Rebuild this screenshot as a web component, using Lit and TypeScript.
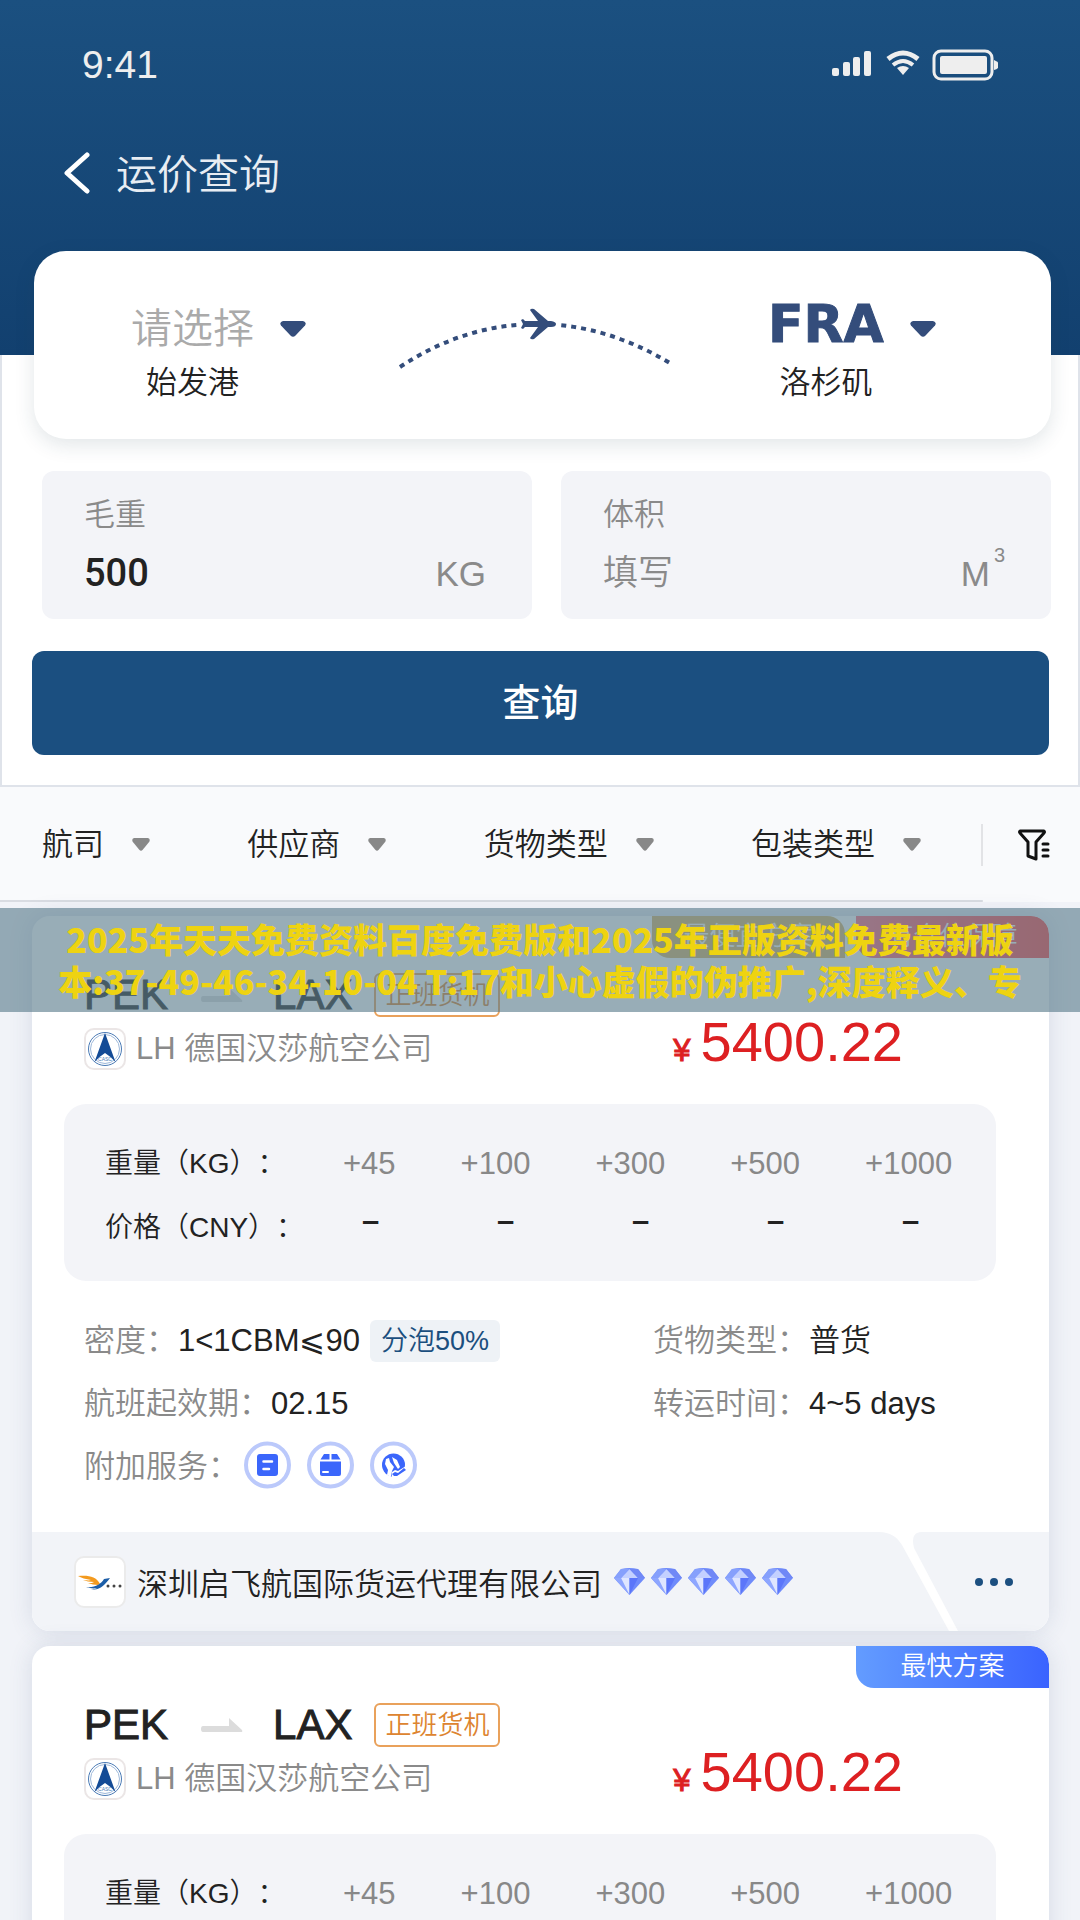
import { LitElement, html, css, svg, TemplateResult } from "lit";
import { customElement, property, state } from "lit/decorators.js";

interface Badge {
  label: string;
  tone: "gold" | "red" | "blue";
}

interface Quote {
  from: string;
  to: string;
  tag: string;
  airline: string;
  price: string;
  badges: Badge[];
  density: string;
  bubble: string;
  cargoType: string;
  startDate: string;
  transit: string;
  agent: string;
  stars: number;
}

const WEIGHT_BREAKS = ["+45", "+100", "+300", "+500", "+1000"];

const FILTERS = ["航司", "供应商", "货物类型", "包装类型"];

const BASE_QUOTE: Quote = {
  from: "PEK",
  to: "LAX",
  tag: "正班货机",
  airline: "LH 德国汉莎航空公司",
  price: "5400.22",
  badges: [],
  density: "1<1CBM⩽90",
  bubble: "分泡50%",
  cargoType: "普货",
  startDate: "02.15",
  transit: "4~5 days",
  agent: "深圳启飞航国际货运代理有限公司",
  stars: 5,
};

const QUOTES: Quote[] = [
  {
    ...BASE_QUOTE,
    badges: [
      { label: "最便宜方案", tone: "gold" },
      { label: "有仓位保障", tone: "red" },
    ],
  },
  { ...BASE_QUOTE, badges: [{ label: "最快方案", tone: "blue" }] },
];

const caret = (width: number, height: number): TemplateResult => html`
  <svg
    class="caret"
    width=${width}
    height=${height}
    viewBox="0 0 26 16"
    preserveAspectRatio="none"
    aria-hidden="true"
  >
    <path
      d="M3 0H23Q27 1 25 4.500L15.500 14.500Q13 17 10.500 14.500L1 4.500Q-1 1 3 0Z"
      fill="currentColor"
    />
  </svg>
`;

@customElement("quote-card")
class QuoteCard extends LitElement {
  @property({ attribute: false }) public quote!: Quote;

  protected render(): TemplateResult {
    const quote = this.quote;

    return html`
      <article class="card">
        <div class="badges">
          ${quote.badges.map(
            (badge) => html`<span class="badge ${badge.tone}">${badge.label}</span>`
          )}
        </div>
        <div class="summary">
          <div class="flight">
            <div class="route">
              <span>${quote.from}</span>
              <svg class="arrow" width="42" height="14" viewBox="0 0 42 14" aria-hidden="true">
                <path d="M2 8H28V0L41 12Q42 14 40 14H2Q0 14 0 11Q0 8 2 8Z" fill="#dcdcdc" />
              </svg>
              <span>${quote.to}</span>
              <span class="tag">${quote.tag}</span>
            </div>
            <div class="airline">${this.renderAirlineLogo()}<span>${quote.airline}</span></div>
          </div>
          <div class="price"><small>¥</small>${quote.price}</div>
        </div>

        ${this.renderRates()}

        <dl class="details">
          <div class="detail">
            <dt>密度：</dt>
            <dd>${quote.density}<span class="bubble">${quote.bubble}</span></dd>
          </div>
          <div class="detail">
            <dt>货物类型：</dt>
            <dd>${quote.cargoType}</dd>
          </div>
          <div class="detail">
            <dt>航班起效期：</dt>
            <dd>${quote.startDate}</dd>
          </div>
          <div class="detail">
            <dt>转运时间：</dt>
            <dd>${quote.transit}</dd>
          </div>
          <div class="detail">
            <dt>附加服务：</dt>
            <dd class="services">${this.renderServices()}</dd>
          </div>
        </dl>

        <footer class="footer">
          <div class="agent">
            ${this.renderAgentLogo()}
            <span>${quote.agent}</span>
            <span class="diamonds">
              ${Array.from({ length: quote.stars }, () => this.renderDiamond())}
            </span>
          </div>
          <svg class="slash" width="88" height="99" viewBox="0 0 88 99" aria-hidden="true">
            <path d="M9 0C20 0 27 5 32 13L79 99H88L44 16Q40 0 52 0Z" fill="#fff" />
          </svg>
          <button class="more" type="button" aria-label="更多">
            <svg width="38" height="8" viewBox="0 0 38 8">
              <g fill="#1c4f80">
                <circle cx="4" cy="4" r="4" />
                <circle cx="19" cy="4" r="4" />
                <circle cx="34" cy="4" r="4" />
              </g>
            </svg>
          </button>
        </footer>
      </article>
    `;
  }

  private renderRates(): TemplateResult {
    return html`
      <table class="rates">
        <tbody>
          <tr class="weights">
            <th scope="row">重量（KG）：</th>
            ${WEIGHT_BREAKS.map((weight) => html`<td>${weight}</td>`)}
          </tr>
          <tr class="prices">
            <th scope="row">价格（CNY）：</th>
            ${WEIGHT_BREAKS.map(() => html`<td>–</td>`)}
          </tr>
        </tbody>
      </table>
    `;
  }

  private renderAirlineLogo(): TemplateResult {
    return html`
      <svg class="airline-logo" width="42" height="42" viewBox="0 0 42 42" aria-hidden="true">
        <rect x="1" y="1" width="40" height="40" rx="9" fill="#fff" stroke="#ebe6e6" stroke-width="2" />
        <circle cx="21" cy="21" r="16.500" fill="none" stroke="#4a7ab5" stroke-width="1" />
        <circle cx="21" cy="21" r="14.500" fill="none" stroke="#9db8da" stroke-width="1" />
        <path d="M21 5L31.500 34Q26 28 21 25Q16 28 10.500 34Z" fill="#134b96" />
        <text x="21" y="33" font-size="5" text-anchor="middle" fill="#4a7ab5">CASC</text>
      </svg>
    `;
  }

  private renderAgentLogo(): TemplateResult {
    return html`
      <svg class="agent-logo" width="52" height="52" viewBox="0 0 52 52" aria-hidden="true">
        <rect x="1" y="1" width="50" height="50" rx="9" fill="#fff" stroke="#ebebeb" stroke-width="2" />
        <path
          d="M4 20C14 19 22 20 26 28L24 29C21 29 17 28 14 27C17 27 19 27 20 26C16 26 12 25 9 24C12 24 15 25 17 24C12 23 7 22 4 20Z"
          fill="#f39a1e"
        />
        <path d="M12 31C21 32 27 28 30 23L36 22C31 29 25 35 17 33C20 33 22 33 23 32C19 33 16 32 12 31Z" fill="#1c5ea8" />
        <g fill="#444">
          <circle cx="34" cy="30" r="1.500" />
          <circle cx="40" cy="30" r="1.500" />
          <circle cx="46" cy="30" r="1.500" />
        </g>
      </svg>
    `;
  }

  private renderDiamond(): TemplateResult {
    return html`
      <svg width="31" height="27" viewBox="0 0 31 27" aria-hidden="true">
        <path d="M7 1Q15.500 -1 24 1L31 10L15.500 27L0 10Z" fill="#6f8bfb" />
        <path d="M15.500 1L24 10H7Z" fill="#c3d0ff" />
        <path d="M7 1L15.500 1L7 10H0Z" fill="#86a0fc" />
        <path d="M24 1L15.500 1L24 10H31Z" fill="#7088f6" />
        <path d="M0 10H7L15.500 27Z" fill="#8ea6ff" />
        <path d="M7 10H15.500V27Z" fill="#dfe6ff" />
        <path d="M15.500 10H24L15.500 27Z" fill="#5b76fa" />
      </svg>
    `;
  }

  private renderServices(): TemplateResult[] {
    const icons = [
      svg`
        <rect x="13" y="13" width="21" height="22" rx="3" fill="#3b66fb" />
        <path d="M19.500 20.500H28M19.500 28H25" stroke="#fff" stroke-width="2.500" stroke-linecap="round" />
      `,
      svg`
        <path d="M17 13H22.500V18.500H13.500ZM24.500 13H30L33.500 18.500H24.500Z" fill="#3b66fb" />
        <path d="M13 20.500H34V33Q34 35 32 35H15Q13 35 13 33Z" fill="#3b66fb" />
        <path d="M16 31H21" stroke="#fff" stroke-width="2" stroke-linecap="round" />
      `,
      svg`
        <circle cx="23.500" cy="24" r="11.500" fill="#3b66fb" />
        <path d="M16 18L19 17L20 21L24 26L22 30L21 36L17 34L18 29L15 23ZM22 16L27 19L30 26L28 28L24 22Z" fill="#fff" />
        <path d="M22 31L25 29L28 30L36 25L38 28L28 37L22 37Z" fill="#fff" />
        <path d="M22 33L25 31L28 32L34 27L36 29L27 35L24 35Z" fill="#3b66fb" />
      `,
    ];

    return icons.map(
      (icon) => html`
        <svg width="47" height="48" viewBox="0 0 47 48" aria-hidden="true">
          <circle cx="23.500" cy="24" r="21.500" fill="#fff" stroke="#bbc9fb" stroke-width="4" />
          ${icon}
        </svg>
      `
    );
  }

  public static get styles() {
    return css`
      :host {
        display: block;
      }

      .card {
        display: flex;
        flex-direction: column;
        border-radius: 18px;
        background: #fff;
        box-shadow: 0 0 24px rgba(60, 75, 120, 0.14);
        overflow: hidden;
      }

      .badges {
        display: flex;
        justify-content: flex-end;
        gap: 11px;
        height: 42px;
      }

      .badge {
        width: 193px;
        border-radius: 0 18px 0 18px;
        color: #fff;
        font-size: 26px;
        line-height: 40px;
        text-align: center;
      }

      .badge.gold {
        background: #d8b468;
      }

      .badge.red {
        background: linear-gradient(90deg, #ff6a7c, #ff4545);
      }

      .badge.blue {
        background: linear-gradient(90deg, #639cff, #3a63ff);
      }

      .summary {
        display: flex;
        justify-content: space-between;
        align-items: flex-end;
        padding: 15px 146px 0 52px;
      }

      .flight {
        display: flex;
        flex-direction: column;
        gap: 10px;
      }

      .route {
        display: flex;
        align-items: center;
        color: #222;
        font-size: 42px;
        line-height: 42px;
        -webkit-text-stroke: 1px #222;
      }

      .arrow {
        margin: 0 30px 0 33px;
      }

      .tag {
        margin-left: 22px;
        padding: 0 9px;
        border: 2px solid #e9a15b;
        border-radius: 6px;
        color: #dd8430;
        font-size: 26px;
        line-height: 40px;
        -webkit-text-stroke: 0;
      }

      .airline {
        display: flex;
        align-items: center;
        gap: 10px;
        color: #8a8a8a;
        font-size: 31px;
        line-height: 44px;
      }

      .price {
        color: #dd2022;
        font-size: 56px;
        line-height: 40px;
      }

      .price small {
        margin-right: 10px;
        font-size: 31px;
        -webkit-text-stroke: 1px #dd2022;
      }

      .rates {
        display: block;
        margin: 33px 53px 0 32px;
        padding: 28px 0 21px;
        border-radius: 22px;
        background: #f3f4f8;
        color: #222;
      }

      .rates tbody {
        display: block;
      }

      .rates tr {
        display: flex;
        height: 64px;
        padding-left: 41px;
        line-height: 64px;
      }

      .rates th {
        flex: none;
        padding: 0;
        font-size: 28px;
        font-weight: inherit;
        text-align: left;
        text-spacing-trim: space-all;
        white-space: nowrap;
      }

      .rates td {
        padding: 0;
        font-size: 31px;
      }

      .weights th {
        width: 238px;
      }

      .weights td {
        padding-right: 65px;
        color: #888;
      }

      .weights td:last-child {
        padding-right: 0;
      }

      .prices th {
        width: 198px;
      }

      .prices td {
        width: 135px;
        font-weight: 700;
        line-height: 50px;
        text-align: center;
      }

      .details {
        display: grid;
        grid-template-columns: 569fr 396fr;
        margin: 0;
        padding: 28px 0 34px 52px;
      }

      .detail {
        display: flex;
        height: 63px;
        font-size: 31px;
        line-height: 63px;
        white-space: nowrap;
      }

      .detail dt {
        color: #8a8a8a;
      }

      .detail dd {
        display: flex;
        align-items: center;
        margin: 0 0 0 1px;
        color: #222;
      }

      .bubble {
        margin-left: 10px;
        padding: 0 11px;
        border-radius: 6px;
        background: #eef2f6;
        color: #1b4f7e;
        font-size: 27px;
        line-height: 42px;
      }

      .services {
        gap: 16px;
        padding: 0 0 4px 4px;
      }

      .footer {
        display: flex;
        background: #f2f4f8;
      }

      .agent {
        display: flex;
        flex: 1;
        align-items: center;
        padding-left: 42px;
        color: #222;
        font-size: 31px;
        white-space: nowrap;
      }

      .agent-logo {
        margin-right: 11px;
      }

      .diamonds {
        display: flex;
        gap: 6px;
        margin-left: 12px;
      }

      .more {
        display: flex;
        align-items: center;
        justify-content: center;
        width: 91px;
        padding: 0 20px 0 0;
        border: 0;
        background: none;
      }
    `;
  }
}

@customElement("app-root")
class AppRoot extends LitElement {
  @state() private _weight = "500";

  protected render(): TemplateResult {
    return html`
      <main class="screen">
        <header class="header">
          <div class="status">
            <span>9:41</span>
            ${this.renderStatusIcons()}
          </div>
          <div class="title">
            <button class="back" type="button" aria-label="返回">
              <svg width="26" height="42" viewBox="0 0 26 42">
                <path
                  d="M23 3L3 21L23 39"
                  fill="none"
                  stroke="#fff"
                  stroke-width="5"
                  stroke-linecap="round"
                  stroke-linejoin="round"
                />
              </svg>
            </button>
            <h1>运价查询</h1>
          </div>
        </header>

        <form class="search" @submit=${this._handleSubmit}>
          <div class="ports">
            <div class="port">
              <select id="origin" class="origin">
                <option>请选择</option>
              </select>
              ${caret(26, 16)}
              <label for="origin">始发港</label>
            </div>
            ${this.renderFlightPath()}
            <div class="port">
              <select id="destination" class="destination">
                <option>FRA</option>
              </select>
              ${caret(26, 16)}
              <label for="destination">洛杉矶</label>
            </div>
          </div>

          <div class="fields">
            <div class="field">
              <label for="weight">毛重</label>
              <div class="value">
                <input
                  id="weight"
                  class="filled"
                  .value=${this._weight}
                  @input=${this._handleWeight}
                />
                <span class="unit">KG</span>
              </div>
            </div>
            <div class="field">
              <label for="volume">体积</label>
              <div class="value">
                <input id="volume" placeholder="填写" />
                <span class="unit">M<sup>3</sup></span>
              </div>
            </div>
          </div>

          <button class="submit" type="submit">查询</button>
        </form>

        <nav class="filters">
          <div class="filter-list">
            ${FILTERS.map(
              (filter) => html`
                <label class="filter">
                  <select aria-label=${filter}>
                    <option>${filter}</option>
                  </select>
                  ${caret(18, 13)}
                </label>
              `
            )}
          </div>
          <button class="funnel" type="button" aria-label="筛选">
            <svg
              width="32"
              height="32"
              viewBox="0 0 32 32"
              fill="none"
              stroke="#111"
              stroke-linejoin="round"
              stroke-linecap="round"
            >
              <path d="M2 2H26Q27 3 26 4L18 13V30L10 27V13L2 4Q1 3 2 2Z" stroke-width="3" />
              <path d="M25 15H30M25 21H30M25 27H30" stroke-width="3" />
            </svg>
          </button>
        </nav>

        <section class="results">
          ${QUOTES.map((quote) => html`<quote-card .quote=${quote}></quote-card>`)}
          <p class="notice">
            <span>2025年天天免费资料百度免费版和2025年正版资料免费最新版</span>
            <span>本:37-49-46-34-10-04 T:17和小心虚假的伪推广,深度释义、专</span>
          </p>
        </section>
      </main>
    `;
  }

  private renderStatusIcons(): TemplateResult {
    return html`
      <svg width="168" height="32" viewBox="0 0 168 32" aria-hidden="true">
        <g fill="#eee">
          <rect x="2" y="19" width="7" height="8" rx="2" />
          <rect x="13" y="13" width="7" height="14" rx="2" />
          <rect x="23" y="8" width="7" height="19" rx="2" />
          <rect x="34" y="2" width="7" height="25" rx="2" />
          <path d="M67 19Q73 15 79 19L73 26Z" />
          <rect x="110" y="7" width="47" height="18" rx="2" />
          <path d="M164 11Q169 13 169 16Q169 20 164 21Z" />
        </g>
        <g fill="none" stroke="#eee">
          <path d="M58 10Q73 -2 88 10" stroke-width="5" />
          <path d="M63 16Q73 8 83 16" stroke-width="4" />
          <rect x="104" y="2" width="58" height="28" rx="7" stroke-width="3" />
        </g>
      </svg>
    `;
  }

  private renderFlightPath(): TemplateResult {
    return html`
      <svg class="path" width="276" height="62" viewBox="0 0 276 62" aria-hidden="true">
        <path
          d="M1 59Q66 16 138 16Q208 16 274 57"
          fill="none"
          stroke="#344d7b"
          stroke-width="4"
          stroke-dasharray="5 5"
        />
        <rect x="121" y="11" width="39" height="10" fill="#fff" />
        <path
          d="M126 13H139L131 2Q132 0 135 1L149 13H152Q157 14 157 16Q157 19 152 19H149L135 31Q132 32 131 30L139 19H126L124 21L122 20L124 16L122 12L124 11Z"
          fill="#344d7b"
        />
      </svg>
    `;
  }

  private _handleWeight(ev: Event): void {
    this._weight = (ev.target as HTMLInputElement).value;
  }

  private _handleSubmit(ev: Event): void {
    ev.preventDefault();
  }

  public static get styles() {
    return css`
      :host {
        display: block;
        font-family: "Liberation Sans", "Noto Sans CJK SC", sans-serif;
        font-weight: 350;
      }

      select,
      input,
      button {
        margin: 0;
        padding: 0;
        border: 0;
        background: none;
        color: inherit;
        font: inherit;
        appearance: none;
      }

      .screen {
        display: flex;
        flex-direction: column;
        height: 100vh;
        overflow-y: auto;
        scrollbar-width: none;
        background: #f1f3f8;
      }

      .header {
        flex: none;
        padding: 40px 82px 152px;
        background: linear-gradient(#1b5080, #12406f);
        color: #fff;
      }

      .status {
        display: flex;
        align-items: center;
        justify-content: space-between;
        color: #eee;
        font-size: 39px;
        line-height: 50px;
      }

      .title {
        display: flex;
        align-items: center;
        gap: 26px;
        margin: 53px 0 0 -18px;
      }

      .back {
        display: flex;
      }

      .title h1 {
        margin: 0;
        padding-top: 4px;
        color: #e8edf3;
        font-size: 41px;
        font-weight: inherit;
        line-height: 56px;
      }

      .search {
        flex: none;
        border: 2px solid #dfe3ea;
        border-top: 0;
        background: #fff;
      }

      .ports {
        display: flex;
        align-items: center;
        justify-content: space-between;
        margin: -104px 27px 0 32px;
        padding: 48px 115px 32px 97px;
        border-radius: 32px;
        background: #fff;
        box-shadow: 0 6px 20px rgba(30, 60, 80, 0.13);
      }

      .port {
        display: grid;
        grid-template-columns: auto auto;
        grid-template-rows: 60px 48px;
        column-gap: 26px;
        align-items: center;
        justify-items: center;
        color: #344d7b;
      }

      .port label {
        color: #222;
        font-size: 31px;
        line-height: 48px;
      }

      .origin {
        color: #aaa;
        font-size: 41px;
        line-height: 60px;
      }

      .destination {
        align-self: start;
        font-family: "DejaVu Sans", sans-serif;
        font-size: 52px;
        font-weight: 700;
        line-height: 50px;
        -webkit-text-stroke: 1px #344d7b;
      }

      .path {
        margin-bottom: 28px;
      }

      .fields {
        display: flex;
        gap: 29px;
        margin: 32px 27px 0 40px;
      }

      .field {
        flex: 1;
        min-width: 0;
        padding: 20px 46px 12px 42px;
        border-radius: 12px;
        background: #f3f4f8;
        color: #8a8a8a;
      }

      .field label {
        display: block;
        font-size: 31px;
        line-height: 48px;
      }

      .value {
        display: flex;
        align-items: center;
        height: 68px;
        font-size: 35px;
      }

      .value input {
        flex: 1;
        width: 0;
        height: 68px;
        outline: none;
      }

      .value input.filled {
        color: #222;
        font-family: Roboto, sans-serif;
        font-size: 38px;
        font-weight: 500;
      }

      .value input::placeholder {
        color: #8a8a8a;
        opacity: 1;
      }

      .unit {
        padding-top: 2px;
      }

      .unit sup {
        margin-left: 4px;
        font-size: 20px;
        line-height: 0;
        vertical-align: 24px;
      }

      .submit {
        display: block;
        width: calc(100% - 59px);
        margin: 32px 29px 30px 30px;
        border-radius: 12px;
        background: #1b4f80;
        color: #fff;
        font-size: 38px;
        font-weight: 500;
        line-height: 104px;
        text-align: center;
      }

      .filters {
        display: flex;
        flex: none;
        align-items: center;
        height: 115px;
        padding: 0 30px 0 42px;
        background: linear-gradient(#d9dce2, #d9dce2) bottom left / 91% 2px no-repeat #f9fafc;
      }

      .filter-list {
        display: flex;
        flex: 1;
        justify-content: space-between;
        padding-right: 60px;
        border-right: 2px solid #e2e3e6;
      }

      .filter {
        display: flex;
        align-items: center;
        gap: 28px;
        color: #888;
      }

      .filter select {
        color: #222;
        font-size: 31px;
        line-height: 42px;
      }

      .funnel {
        display: flex;
        margin-left: 35px;
      }

      .results {
        position: relative;
        display: flex;
        flex-direction: column;
        gap: 15px;
        padding: 14px 31px 16px 32px;
      }

      .notice {
        position: absolute;
        top: 6px;
        right: 0;
        left: 0;
        margin: 0;
        padding: 10px 0;
        background: rgba(92, 125, 141, 0.63);
        color: #eed311;
        font-family: "Noto Sans CJK SC", sans-serif;
        font-size: 34px;
        font-weight: 900;
        line-height: 42px;
        text-align: center;
        white-space: nowrap;
      }

      .notice span {
        display: block;
      }
    `;
  }
}

declare global {
  interface HTMLElementTagNameMap {
    "app-root": AppRoot;
    "quote-card": QuoteCard;
  }
}
